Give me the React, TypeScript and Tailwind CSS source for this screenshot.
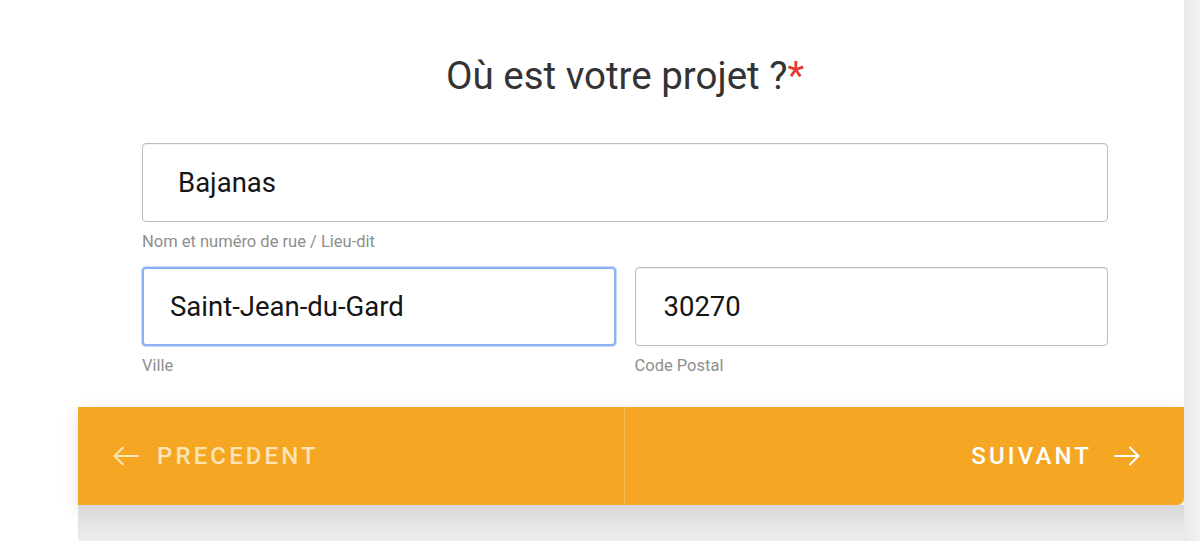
import { useState } from "react"

function Arrow({ dir }: { dir: "left" | "right" }) {
  return (
    <svg width="26" height="20" viewBox="0 0 26 20" fill="none" stroke="currentColor" strokeWidth="2" strokeLinecap="round" strokeLinejoin="round">
      {dir === "left" ? (
        <path d="M25 10H1.5M10 1.5L1.5 10L10 18.5" />
      ) : (
        <path d="M1 10h23.5M16 1.5l8.5 8.5-8.5 8.5" />
      )}
    </svg>
  )
}

function Field({
  value,
  label,
  focused,
  padding,
}: {
  value: string
  label: string
  focused?: boolean
  padding: string
}) {
  const [text, setText] = useState(value)
  return (
    <div className="flex flex-col">
      <input
        value={text}
        onChange={(e) => setText(e.target.value)}
        className={`h-[79px] w-full rounded-[4px] bg-white text-[27.5px] text-[#151515] outline-none ${padding} ${
          focused
            ? "border-2 border-[#8db1f6] shadow-[0_0_0_1px_#c9dafc]"
            : "border border-[#bcbcbc] shadow-[inset_0_1px_1px_rgba(0,0,0,0.06)]"
        }`}
      />
      <span className="mt-[11px] text-[16.5px] leading-[18px] text-[#8e8e8e]">{label}</span>
    </div>
  )
}

export default function App() {
  return (
    <div className="flex h-[541px] w-[1200px] overflow-hidden bg-white font-['Roboto',sans-serif]">
      <div className="w-[78px] shrink-0 bg-white" />

      <div className="flex w-[1106px] shrink-0 flex-col">
        <div className="bg-white">
          <div className="ml-[64px] w-[966px] pt-[54px] pb-[32px]">
            <h2 className="text-center text-[38.5px] leading-[44px] text-[#333333]">
              Où est votre projet ?<span className="text-[#e53935]">*</span>
            </h2>

            <div className="mt-[45px] flex flex-col gap-[16px]">
              <Field value="Bajanas" label="Nom et numéro de rue / Lieu-dit" padding="pl-[35px]" />
              <div className="grid grid-cols-2 gap-[19px]">
                <Field value="Saint-Jean-du-Gard" label="Ville" focused padding="pl-[26px]" />
                <Field value="30270" label="Code Postal" padding="pl-[28px]" />
              </div>
            </div>
          </div>
        </div>

        <div className="flex h-[98px] shrink-0 rounded-br-[7px] bg-[#f5a623] shadow-[0_6px_18px_rgba(0,0,0,0.12)]">
          <button className="flex w-[547px] items-center gap-[18px] border-r border-[#f8bb55] pl-[35px] text-[#fde3b5]">
            <Arrow dir="left" />
            <span className="text-[24px] font-medium tracking-[0.13em]">PRECEDENT</span>
          </button>
          <button className="flex flex-1 items-center justify-end gap-[22px] pr-[44px] text-white">
            <span className="text-[24px] font-medium tracking-[0.13em]">SUIVANT</span>
            <Arrow dir="right" />
          </button>
        </div>

        <div className="flex-1 bg-gradient-to-b from-[#d9d9d9] to-[#eeeeee]" />
      </div>

      <div className="flex-1 bg-gradient-to-r from-[#e9e9e9] to-[#f2f2f2]" />
    </div>
  )
}
